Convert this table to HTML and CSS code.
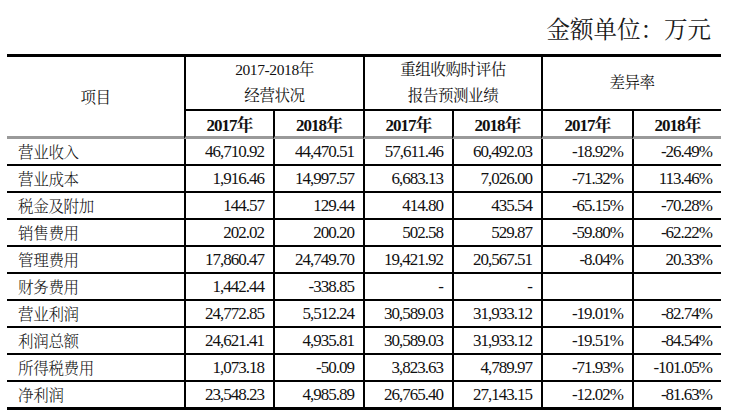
FILE: index.html
```html
<!DOCTYPE html>
<html lang="zh-CN">
<head>
<meta charset="utf-8">
<title>金额单位：万元</title>
<link rel="stylesheet" href="styles.css">
</head>
<body>
<div class="unit">金额单位：万元</div>
<table class="fin">
  <colgroup>
    <col class="c-item">
    <col class="c-a"><col class="c-b">
    <col class="c-a"><col class="c-a">
    <col class="c-c"><col class="c-a">
  </colgroup>
  <thead>
    <tr class="h1">
      <th class="item" rowspan="2">项目</th>
      <th class="grp" colspan="2">2017-2018年<br>经营状况</th>
      <th class="grp" colspan="2">重组收购时评估<br>报告预测业绩</th>
      <th class="grp" colspan="2">差异率</th>
    </tr>
    <tr class="h2">
      <th>2017年</th><th>2018年</th>
      <th>2017年</th><th>2018年</th>
      <th>2017年</th><th>2018年</th>
    </tr>
  </thead>
  <tbody>
    <tr><td class="lbl">营业收入</td><td class="n">46,710.92</td><td class="n">44,470.51</td><td class="n">57,611.46</td><td class="n">60,492.03</td><td class="n">-18.92%</td><td class="n">-26.49%</td></tr>
    <tr><td class="lbl">营业成本</td><td class="n">1,916.46</td><td class="n">14,997.57</td><td class="n">6,683.13</td><td class="n">7,026.00</td><td class="n">-71.32%</td><td class="n">113.46%</td></tr>
    <tr><td class="lbl">税金及附加</td><td class="n">144.57</td><td class="n">129.44</td><td class="n">414.80</td><td class="n">435.54</td><td class="n">-65.15%</td><td class="n">-70.28%</td></tr>
    <tr><td class="lbl">销售费用</td><td class="n">202.02</td><td class="n">200.20</td><td class="n">502.58</td><td class="n">529.87</td><td class="n">-59.80%</td><td class="n">-62.22%</td></tr>
    <tr><td class="lbl">管理费用</td><td class="n">17,860.47</td><td class="n">24,749.70</td><td class="n">19,421.92</td><td class="n">20,567.51</td><td class="n">-8.04%</td><td class="n">20.33%</td></tr>
    <tr><td class="lbl">财务费用</td><td class="n">1,442.44</td><td class="n">-338.85</td><td class="n">-</td><td class="n">-</td><td class="n"></td><td class="n"></td></tr>
    <tr><td class="lbl">营业利润</td><td class="n">24,772.85</td><td class="n">5,512.24</td><td class="n">30,589.03</td><td class="n">31,933.12</td><td class="n">-19.01%</td><td class="n">-82.74%</td></tr>
    <tr><td class="lbl">利润总额</td><td class="n">24,621.41</td><td class="n">4,935.81</td><td class="n">30,589.03</td><td class="n">31,933.12</td><td class="n">-19.51%</td><td class="n">-84.54%</td></tr>
    <tr><td class="lbl">所得税费用</td><td class="n">1,073.18</td><td class="n">-50.09</td><td class="n">3,823.63</td><td class="n">4,789.97</td><td class="n">-71.93%</td><td class="n">-101.05%</td></tr>
    <tr class="last"><td class="lbl">净利润</td><td class="n">23,548.23</td><td class="n">4,985.89</td><td class="n">26,765.40</td><td class="n">27,143.15</td><td class="n">-12.02%</td><td class="n">-81.63%</td></tr>
  </tbody>
</table>
</body>
</html>
```

FILE: styles.css
```css
html, body {
  margin: 0;
  padding: 0;
  background: #ffffff;
}

body {
  color: #111111;
  font-family: "Liberation Serif", "Noto Serif CJK SC", "Noto Sans CJK SC", serif;
}

.unit {
  height: 30px;
  padding: 13px 18px 0 0;
  text-align: right;
  font-family: "Noto Serif CJK SC", "Noto Sans CJK SC", sans-serif;
  font-size: 23.5px;
  line-height: 30px;
  color: #1a1a1a;
}

.fin {
  border-collapse: separate;
  border-spacing: 0;
  table-layout: fixed;
  width: 714px;
  margin: 11px 0 0 7px;
}

.c-item { width: 177px; }
.c-a { width: 89px; }
.c-b { width: 90px; }
.c-c { width: 91px; }

.fin th,
.fin td {
  padding: 0;
  box-sizing: border-box;
  white-space: nowrap;
}

.h1 th {
  height: 56px;
  border-top: 3px solid #000;
  font-weight: normal;
  font-size: 15.5px;
  line-height: 26px;
  letter-spacing: -0.4px;
  text-align: center;
  vertical-align: middle;
  font-family: "Liberation Serif", "Noto Serif CJK SC", "Noto Sans CJK SC", serif;
}

.h1 .item {
  border-bottom: 3px solid #9a9a9a;
  padding-top: 2px;
}

.h1 .grp {
  border-left: 2px solid #000;
  border-bottom: 2px solid #000;
}

.h2 th {
  height: 27px;
  border-left: 2px solid #000;
  border-bottom: 3px solid #9a9a9a;
  font-size: 17px;
  font-weight: bold;
  letter-spacing: -1px;
  text-align: center;
  vertical-align: middle;
}

.fin tbody td {
  height: 27px;
  border-bottom: 2px solid #000;
  font-size: 17px;
  line-height: 24px;
  vertical-align: middle;
}

.fin tbody tr:nth-child(3n) td {
  height: 26px;
}

.fin tbody tr.last td {
  height: 28px;
  border-bottom-width: 3px;
}

.fin td.lbl {
  padding-left: 11px;
  padding-bottom: 1px;
  font-size: 15.5px;
  letter-spacing: -0.3px;
  font-family: "Noto Serif CJK SC", "Noto Sans CJK SC", sans-serif;
  font-weight: 300;
}

.fin td.n {
  border-left: 2px solid #000;
  text-align: right;
  padding-right: 9px;
  letter-spacing: -1px;
}
```
